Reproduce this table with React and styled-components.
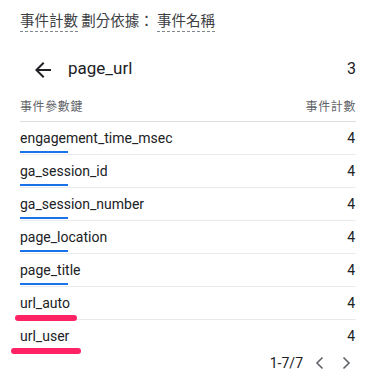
import React from "react";
import styled, { createGlobalStyle } from "styled-components";

const Global = createGlobalStyle`
  html, body { margin: 0; padding: 0; background: #fff; }
  body { font-family: Roboto, "Noto Sans CJK TC", sans-serif; }
`;

const Page = styled.div`
  width: 375px;
  height: 381px;
  box-sizing: border-box;
  padding: 0 19px 0 20px;
  display: flex;
  flex-direction: column;
  overflow: hidden;
`;

const Title = styled.div`
  padding-top: 10px;
  height: 49px;
  flex-shrink: 0;
  box-sizing: border-box;
  font-family: "Noto Sans CJK TC", sans-serif;
  font-size: 14.5px;
  line-height: 20px;
  color: #3c4043;
  white-space: pre;
`;

const Dashed = styled.span`
  display: inline-block;
  padding-bottom: 1px;
  border-bottom: 1px dashed #80868b;
`;

const BackRow = styled.div`
  height: 40px;
  flex-shrink: 0;
  display: flex;
  align-items: center;
  color: #202124;
`;

const BackIcon = styled.svg`
  width: 24px;
  height: 24px;
  margin-left: 11px;
  margin-right: 13px;
  margin-top: 2px;
  fill: #202124;
`;

const ParamName = styled.div`
  flex: 1;
  font-size: 17px;
  margin-top: -2px;
`;

const Count = styled.div`
  font-size: 16px;
  margin-top: -2px;
`;

const HeaderRow = styled.div`
  height: 32px;
  flex-shrink: 0;
  display: flex;
  align-items: center;
  justify-content: space-between;
  border-bottom: 1px solid #dadce0;
  font-family: "Noto Sans CJK TC", sans-serif;
  font-size: 12px;
  letter-spacing: 0.6px;
  color: #5f6368;
`;

const Row = styled.div`
  position: relative;
  height: 32px;
  flex-shrink: 0;
  display: flex;
  align-items: center;
  justify-content: space-between;
  border-bottom: 1px solid ${(p) => (p.$last ? "transparent" : "#e8eaed")};
  font-size: 14px;
  color: #202124;

  &::after {
    content: "";
    display: ${(p) => (p.$bar ? "block" : "none")};
    position: absolute;
    left: 0;
    bottom: 1px;
    width: 48px;
    height: 2px;
    background: #1a73e8;
  }
`;

const Value = styled.span`
  padding-right: 1px;
`;

const Mark = styled.span`
  position: absolute;
  left: ${(p) => p.$left}px;
  width: ${(p) => p.$width}px;
  bottom: ${(p) => p.$bottom}px;
  height: 6px;
  border-radius: 3px;
  background: #ff2365;
`;

const Pager = styled.div`
  height: 20px;
  flex-shrink: 0;
  display: flex;
  align-items: center;
  justify-content: flex-end;
  font-size: 14px;
  color: #202124;
`;

const Chevron = styled.svg`
  width: 20px;
  height: 20px;
  fill: none;
  stroke: #5f6368;
  stroke-width: 1.6;
  margin-left: ${(p) => p.$ml}px;
`;

const rows = [
  { name: "engagement_time_msec", bar: true },
  { name: "ga_session_id", bar: true },
  { name: "ga_session_number", bar: true },
  { name: "page_location", bar: true },
  { name: "page_title", bar: true },
  { name: "url_auto", mark: { left: -5, width: 62, bottom: -2 } },
  { name: "url_user", mark: { left: -9, width: 70, bottom: -2 }, last: true },
];

export default function App() {
  return (
    <>
      <Global />
      <Page>
        <Title>
          <Dashed>事件計數</Dashed> 劃分依據： <Dashed>事件名稱</Dashed>
        </Title>
        <BackRow>
          <BackIcon viewBox="0 0 24 24">
            <path d="M20 11H7.83l5.59-5.59L12 4l-8 8 8 8 1.41-1.41L7.83 13H20v-2z" />
          </BackIcon>
          <ParamName>page_url</ParamName>
          <Count>3</Count>
        </BackRow>
        <HeaderRow>
          <span>事件參數鍵</span>
          <span>事件計數</span>
        </HeaderRow>
        {rows.map((r) => (
          <Row key={r.name} $bar={r.bar} $last={r.last}>
            <span>{r.name}</span>
            <Value>4</Value>
            {r.mark && <Mark $left={r.mark.left} $width={r.mark.width} $bottom={r.mark.bottom} />}
          </Row>
        ))}
        <Pager>
          <span>1-7/7</span>
          <Chevron viewBox="0 0 20 20" $ml={7}>
            <path d="M12.5 4.5 7 10l5.5 5.5" />
          </Chevron>
          <Chevron viewBox="0 0 20 20" $ml={6}>
            <path d="M7.5 4.5 13 10l-5.5 5.5" />
          </Chevron>
        </Pager>
      </Page>
    </>
  );
}
